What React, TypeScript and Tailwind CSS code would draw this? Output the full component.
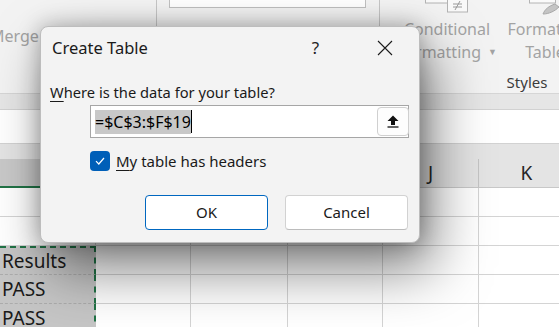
import React from 'react'

const COLS = [
  { letter: 'F', w: 'w-[96px]', selected: true },
  { letter: 'G', w: 'w-[95px]', selected: false },
  { letter: 'H', w: 'w-[97px]', selected: false },
  { letter: 'I', w: 'w-[95px]', selected: false },
  { letter: 'J', w: 'w-[96px]', selected: false },
  { letter: 'K', w: 'w-[96px]', selected: false },
]

const ROWS = ['', '', 'Results', 'PASS', 'PASS']

const FONT = { fontFamily: '"Noto Sans", "Open Sans", sans-serif' }

function CondFormatIcon() {
  return (
    <svg width="44" height="14" viewBox="0 0 44 14" className="block">
      <rect x="0.5" y="-6" width="22" height="9" fill="#fafafa" stroke="#b4b4b4" />
      <rect x="22.5" y="-2" width="20" height="14" fill="#fafafa" stroke="#b4b4b4" />
      <line x1="28" y1="4" x2="37" y2="4" stroke="#9a9a9a" />
      <line x1="28" y1="7" x2="37" y2="7" stroke="#9a9a9a" />
      <line x1="35" y1="1" x2="30" y2="10" stroke="#9a9a9a" />
    </svg>
  )
}

function FormatTableIcon() {
  return (
    <svg width="32" height="15" viewBox="0 0 32 15" className="block">
      <rect x="0.5" y="-6" width="26" height="9" fill="#fafafa" stroke="#b4b4b4" />
      <path d="M14 14 C16 9 20 6 26 4 L30 7 C26 11 20 14 14 14 Z" fill="#c4c4c4" stroke="#a8a8a8" />
    </svg>
  )
}

function Ribbon() {
  return (
    <div className="flex h-[94px] bg-[#f3f3f3] border-b border-[#d6d6d6] overflow-hidden">
      <div className="w-[157px] shrink-0 border-r border-[#c6c6c6]">
        <div className="mt-[24px] -ml-[10px] text-[16px] text-[#a3a3a3]">Merge</div>
      </div>
      <div className="w-[223px] shrink-0 border-r border-[#c6c6c6]">
        <div className="ml-[12px] -mt-[2px] w-[197px] h-[10px] bg-white border border-[#c0c0c0]" />
      </div>
      <div className="w-[294px] shrink-0 flex flex-col">
        <div className="flex h-[71px]">
          <div className="w-[134px] flex flex-col items-center">
            <CondFormatIcon />
            <div className="leading-[22px] text-[16px] text-[#a3a3a3] mt-[4px]">Conditional</div>
            <div className="leading-[22px] text-[16px] text-[#a3a3a3] mt-[1px] flex items-center gap-[7px]">
              Formatting <span className="text-[9px]">▼</span>
            </div>
          </div>
          <div className="w-[62px] flex flex-col items-center">
            <FormatTableIcon />
            <div className="leading-[22px] text-[16px] text-[#a3a3a3] mt-[3px] whitespace-nowrap">Format as</div>
            <div className="leading-[22px] text-[16px] text-[#a3a3a3] mt-[1px] whitespace-nowrap">Table</div>
          </div>
        </div>
        <div className="text-center text-[15px] leading-[22px] text-[#3c3c3c]">Styles</div>
      </div>
    </div>
  )
}

function Grid() {
  return (
    <div>
      <div className="h-[16px] bg-[#e6e6e6] border-b border-[#d2d2d2]" />
      <div className="h-[34px] bg-white border-b border-[#d2d2d2]" />
      <div className="h-[15px] bg-[#e4e4e4]" />
      <div className="flex h-[29px] bg-[#e4e4e4]">
        {COLS.map((c) => (
          <div
            key={c.letter}
            className={
              c.selected
                ? `${c.w} shrink-0 bg-[#c9c9c9] border-r border-[#c4c4c4] border-b-2 border-b-[#217346] flex items-center justify-center text-[19px] text-[#262626]`
                : `${c.w} shrink-0 border-r border-[#c4c4c4] border-b border-b-[#c8c8c8] flex items-center justify-center text-[19px] text-[#262626]`
            }
          >
            {c.letter}
          </div>
        ))}
      </div>
      {ROWS.map((text, r) => (
        <div key={r} className="flex h-[29px]">
          {COLS.map((c, i) => {
            const inSel = i === 0 && r >= 2
            return (
              <div
                key={c.letter}
                className={
                  inSel
                    ? `${c.w} shrink-0 bg-[#c6c6c6] border-b border-[#acacac] border-r-2 border-r-[#217346] border-dashed flex items-center pl-[2px] text-[19px] text-[#1a1a1a] ${r === 2 ? 'border-t-2 border-t-[#217346]' : ''}`
                    : `${c.w} shrink-0 bg-white border-r border-b border-[#d4d4d4]`
                }
              >
                {inSel ? text : null}
              </div>
            )
          })}
        </div>
      ))}
    </div>
  )
}

function UpArrowIcon() {
  return (
    <svg width="12" height="13" viewBox="0 0 12 13">
      <polygon points="6,0.5 11.5,6 8,6 8,10 4,10 4,6 0.5,6" fill="#111" />
      <line x1="0.5" y1="12" x2="11.5" y2="12" stroke="#111" strokeWidth="1.3" />
    </svg>
  )
}

function CreateTableDialog() {
  return (
    <div className="absolute left-[40px] top-[26px] w-[380px] h-[217px] bg-[#f3f3f3] border border-[#bdbdbd] rounded-[8px] shadow-[0_0_22px_rgba(0,0,0,0.28),12px_26px_56px_rgba(0,0,0,0.5)] flex flex-col text-[#1a1a1a]">
      {/* title bar */}
      <div className="flex h-[42px] items-center">
        <div className="flex-1 pl-[11px] text-[16.5px]">Create Table</div>
        <div className="w-[69px] flex items-center justify-center text-[17px] text-[#222]">?</div>
        <div className="w-[69px] flex items-center justify-center">
          <svg width="16" height="16" viewBox="0 0 16 16">
            <path d="M1 1 L15 15 M15 1 L1 15" stroke="#1a1a1a" strokeWidth="1.1" />
          </svg>
        </div>
      </div>

      <div className="mt-[13px] pl-[9px] text-[14.7px] leading-[20px]">
        <span className="underline underline-offset-[3px]">W</span>here is the data for your table?
      </div>

      <div className="mt-[3px] ml-[49px] w-[319px] h-[33px] bg-white border border-[#a6a6a6] flex items-center">
        <div className="flex-1 flex items-center pl-[4px]">
          <span className="bg-[#c8c8c8] text-[16px] leading-[24px] text-black">=$C$3:$F$19</span>
          <span className="w-px h-[23px] bg-black" />
        </div>
        <div className="w-[32px] h-[29px] -mr-px bg-[#fdfdfd] border border-[#d0d0d0] rounded-[4px] flex items-center justify-center">
          <UpArrowIcon />
        </div>
      </div>

      <div className="mt-[13px] ml-[49px] flex items-center gap-[6px]">
        <div className="w-[20px] h-[20px] rounded-[4px] bg-[#005fb8] flex items-center justify-center">
          <svg width="14" height="14" viewBox="0 0 14 14">
            <path d="M3 7.2 L5.8 10 L11 4" fill="none" stroke="white" strokeWidth="1.2" />
          </svg>
        </div>
        <div className="text-[15px] leading-[20px]">
          <span className="underline underline-offset-[3px]">M</span>y table has headers
        </div>
      </div>

      <div className="mt-[24px] flex justify-end gap-[17px] pr-[11px]">
        <button className="w-[123px] h-[35px] bg-white border border-[#0067c0] rounded-[4px] text-[15px] text-[#1a1a1a]">
          OK
        </button>
        <button className="w-[123px] h-[35px] bg-white border border-[#d2d2d2] border-b-[#bcbcbc] rounded-[4px] text-[15px] text-[#1a1a1a]">
          Cancel
        </button>
      </div>
    </div>
  )
}

export default function App() {
  return (
    <div className="relative w-[559px] h-[327px] overflow-hidden bg-white" style={FONT}>
      <Ribbon />
      <Grid />
      <CreateTableDialog />
    </div>
  )
}
